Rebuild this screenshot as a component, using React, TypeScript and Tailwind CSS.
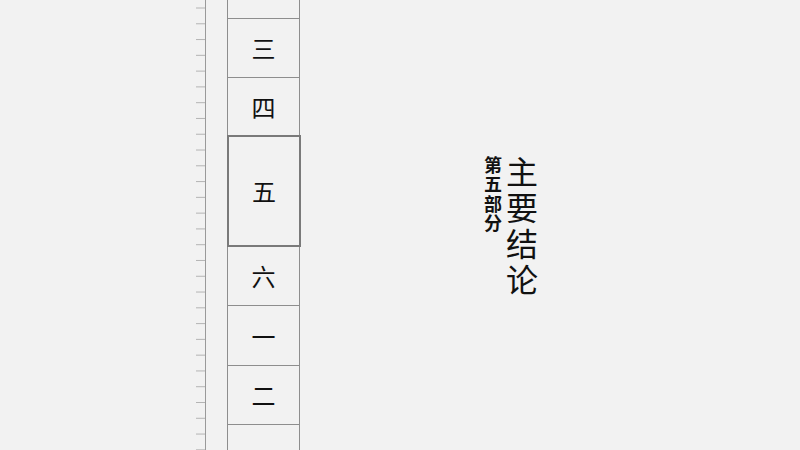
import React from 'react';

const FONT = { fontFamily: '"Noto Sans CJK SC", "Noto Sans", sans-serif' };

function Ruler() {
  const ticks = Array.from({ length: 29 }, (_, i) => 8 + i * 15.78);
  return (
    <svg width="11" height="450" className="shrink-0">
      {ticks.map((y) => (
        <line key={y} x1="0" x2="9" y1={y} y2={y} stroke="#b4b4b4" strokeWidth="1" />
      ))}
      <line x1="9.5" x2="9.5" y1="0" y2="450" stroke="#9a9a9a" strokeWidth="1" />
    </svg>
  );
}

function Cell({ label, h, last }: { label?: string; h: string; last?: boolean }) {
  return (
    <div
      className={`${h} w-[73px] shrink-0 border-x border-[#8e8e8e] ${last ? '' : 'border-b'} flex items-center justify-center text-[24px] leading-none text-[#111]`}
    >
      {label}
    </div>
  );
}

export default function App() {
  return (
    <div className="w-[800px] h-[450px] bg-[#f2f2f2] flex overflow-hidden" style={FONT}>
      <div className="w-[196px] shrink-0" />
      <Ruler />
      <div className="w-[20px] shrink-0" />
      <div className="flex flex-col items-start">
        <Cell h="h-[19px]" />
        <Cell h="h-[59px]" label="三" />
        <Cell h="h-[57px]" label="四" last />
        <div className="h-[112px] w-[74px] shrink-0 border-2 border-[#7a7a7a] flex items-center justify-center text-[24px] leading-none text-[#111]">
          五
        </div>
        <Cell h="h-[59px]" label="六" />
        <Cell h="h-[60px]" label="一" />
        <Cell h="h-[59px]" label="二" />
        <Cell h="h-[40px]" />
      </div>
      <div className="flex items-start gap-[4px] ml-[183px]">
        <div className="pt-[156px] text-[18px] leading-none font-bold tracking-[1.5px] text-[#111] [writing-mode:vertical-rl]">
          第五部分
        </div>
        <div className="pt-[156px] text-[32px] leading-none tracking-[4px] text-[#111] [writing-mode:vertical-rl]">
          主要结论
        </div>
      </div>
    </div>
  );
}
